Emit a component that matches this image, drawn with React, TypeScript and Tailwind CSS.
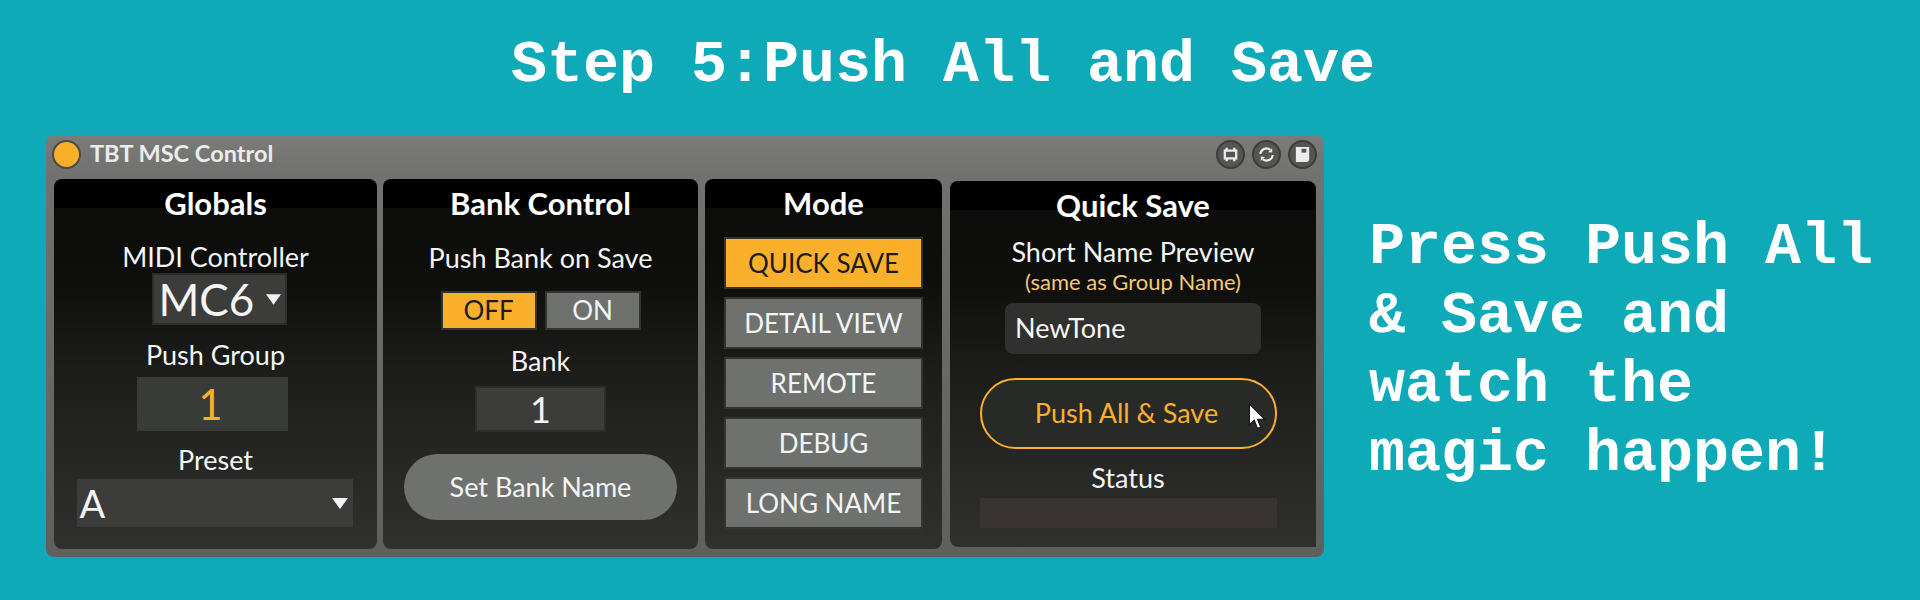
const UI = "font-['Lato','Noto_Sans',sans-serif]";

function Caret({ className }: { className: string }) {
  return (
    <svg viewBox="0 0 16 11" className={className}>
      <path d="M0 0H16L8 11Z" fill="#f2f2f2" />
    </svg>
  );
}

function HeaderIcon({ children }: { children: React.ReactNode }) {
  return (
    <div className="flex h-[29px] w-[29px] items-center justify-center rounded-full border-2 border-[#3d3e3c] bg-[#555654]">
      <svg viewBox="0 0 20 20" className="h-[19px] w-[19px]">
        {children}
      </svg>
    </div>
  );
}

function Panel({ title, className, children }: { title: string; className: string; children?: React.ReactNode }) {
  return (
    <section
      className={`flex flex-col items-center bg-[linear-gradient(180deg,#000_0,#000_29px,#0c0d0b_29px,#0e0f0d_100px,#1c1d1b_190px,#30312f_100%)] ${className}`}
    >
      <h2 className="mt-[8px] h-[32px] text-[31px] leading-[32px] font-bold text-white">{title}</h2>
      {children}
    </section>
  );
}

function Label({ children, className = "" }: { children: React.ReactNode; className?: string }) {
  return <div className={`text-[27px] leading-[30px] text-[#f4f4f4] ${className}`}>{children}</div>;
}

function ModeButton({ label, active, last }: { label: string; active?: boolean; last?: boolean }) {
  return (
    <div
      className={`flex h-[52px] w-[199px] items-center justify-center border-2 border-[#333432] text-[26px] ${last ? "" : "mb-[8px]"} ${
        active ? "bg-[#fbb02c] text-[#1c1c1a]" : "bg-[#6f716e] text-[#f4f4f4]"
      }`}
    >
      {label}
    </div>
  );
}

export default function App() {
  return (
    <div className="h-[600px] w-[1920px] overflow-hidden bg-[#0eaab8] text-white">
      <h1 className="pt-[30px] pr-[34px] text-center font-['Liberation_Mono',monospace] text-[60px] leading-[70px] font-bold">
        Step 5:Push All and Save
      </h1>

      <div className="mt-[35px] flex items-start pl-[46px]">
        <div className={`flex h-[422px] w-[1278px] flex-col rounded-[8px] bg-[linear-gradient(180deg,#7b7c79_0,#71726f_40px,#5f5f5d_100%)] ${UI}`}>
          <header className="flex h-[38px] items-center pr-[7px] pl-[6px]">
            <div className="h-[29px] w-[29px] rounded-full border-2 border-[#4a4a48] bg-[#fbb02c]" />
            <span className="ml-[9px] text-[23.5px] font-bold text-[#ececec]">TBT MSC Control</span>
            <div className="ml-auto flex gap-[7px]">
              <HeaderIcon>
                <path d="M4 6H16V14H4Z" fill="none" stroke="#ececec" strokeWidth="2.4" />
                <path d="M6 3V6M14 3V6M6 14V17M14 14V17" stroke="#ececec" strokeWidth="2.4" />
              </HeaderIcon>
              <HeaderIcon>
                <path d="M3.5 9.5A6.5 6.5 0 0 1 14 5" fill="none" stroke="#ececec" strokeWidth="2.2" />
                <path d="M16.5 10.5A6.5 6.5 0 0 1 6 15" fill="none" stroke="#ececec" strokeWidth="2.2" />
                <path d="M11.5 7.5L16 8V3.5ZM8.5 12.5L4 12V16.5Z" fill="#ececec" />
              </HeaderIcon>
              <HeaderIcon>
                <path d="M3 2H17V16L15 18H3Z" fill="#ececec" />
                <rect x="9" y="4" width="5" height="4" fill="#555654" />
              </HeaderIcon>
            </div>
          </header>

          <div className="mt-[6px] flex items-start pl-[8px]">
            <Panel title="Globals" className="h-[370px] w-[323px] rounded-[8px]">
              <Label className="mt-[23px]">MIDI Controller</Label>
              <div className="mt-[1px] ml-[7px] flex h-[52px] w-[135px] items-center border-2 border-[#2d2e2c] bg-[#3c3d3b] pr-[4px] pl-[5px]">
                <span className="text-[44px] leading-none text-[#f4f4f4]">MC6</span>
                <Caret className="ml-auto h-[11px] w-[15px]" />
              </div>
              <Label className="mt-[15px]">Push Group</Label>
              <div className="mt-[7px] mr-[7px] flex h-[54px] w-[151px] items-center justify-center bg-[#393b39] pr-[3px] text-[42px] text-[#fbb02c]">1</div>
              <Label className="mt-[14px]">Preset</Label>
              <div className="mt-[4px] mr-[2px] flex h-[48px] w-[276px] items-center bg-[#3c3d3b] pr-[5px] pl-[3px]">
                <span className="text-[38px] leading-none text-[#f4f4f4]">A</span>
                <Caret className="ml-auto h-[11px] w-[16px]" />
              </div>
            </Panel>

            <Panel title="Bank Control" className="ml-[6px] h-[370px] w-[315px] rounded-[8px]">
              <Label className="mt-[24px]">Push Bank on Save</Label>
              <div className="mt-[18px] flex gap-[8px]">
                <div className="flex h-[39px] w-[96px] items-center justify-center border-2 border-[#333432] bg-[#fbb02c] text-[26px] text-[#1c1c1a]">OFF</div>
                <div className="flex h-[39px] w-[96px] items-center justify-center border-2 border-[#333432] bg-[#6f716e] text-[26px] text-[#f4f4f4]">ON</div>
              </div>
              <Label className="mt-[16px]">Bank</Label>
              <div className="mt-[10px] flex h-[46px] w-[131px] items-center justify-center border-2 border-[#2d2e2c] bg-[#3c3d3b] text-[36px] text-[#f4f4f4]">1</div>
              <div className="mt-[22px] flex h-[66px] w-[273px] items-center justify-center rounded-full bg-[#6f716e] text-[27px] text-[#f4f4f4]">Set Bank Name</div>
            </Panel>

            <Panel title="Mode" className="ml-[7px] h-[370px] w-[237px] rounded-[8px]">
              <div className="mt-[18px] flex flex-col">
                <ModeButton label="QUICK SAVE" active />
                <ModeButton label="DETAIL VIEW" />
                <ModeButton label="REMOTE" />
                <ModeButton label="DEBUG" />
                <ModeButton label="LONG NAME" last />
              </div>
            </Panel>

            <Panel title="Quick Save" className="mt-[2px] ml-[8px] h-[366px] w-[366px] rounded-t-[8px] rounded-bl-[8px]">
              <Label className="mt-[16px]">Short Name Preview</Label>
              <div className="mt-[2px] text-[22px] leading-[26px] text-[#f5c87a]">(same as Group Name)</div>
              <div className="mt-[8px] flex h-[51px] w-[256px] items-center rounded-[8px] bg-[#30312f] pl-[10px] text-[27px] text-[#f4f4f4]">NewTone</div>
              <div className="relative mt-[24px] mr-[10px] flex h-[71px] w-[297px] items-center justify-center rounded-full border-2 border-[#fbb02c] bg-[#282a28] pr-[3px] text-[27px] text-[#fbb02c]">
                Push All &amp; Save
                <svg viewBox="0 0 17 25" className="absolute top-[23px] left-[266px] h-[27px] w-[19px]">
                  <path d="M1 1V20L5.5 16L8.5 23.5L11.5 22.5L8.5 15H15Z" fill="#fff" stroke="#111" strokeWidth="1" />
                </svg>
              </div>
              <Label className="mt-[14px] mr-[10px]">Status</Label>
              <div className="mt-[5px] mr-[10px] h-[30px] w-[297px] bg-[#393432]" />
            </Panel>
          </div>
        </div>

        <p className="mt-[78px] ml-[45px] font-['Liberation_Mono',monospace] text-[60px] leading-[69px] font-bold whitespace-pre">
          {"Press Push All\n& Save and\nwatch the\nmagic happen!"}
        </p>
      </div>
    </div>
  );
}
